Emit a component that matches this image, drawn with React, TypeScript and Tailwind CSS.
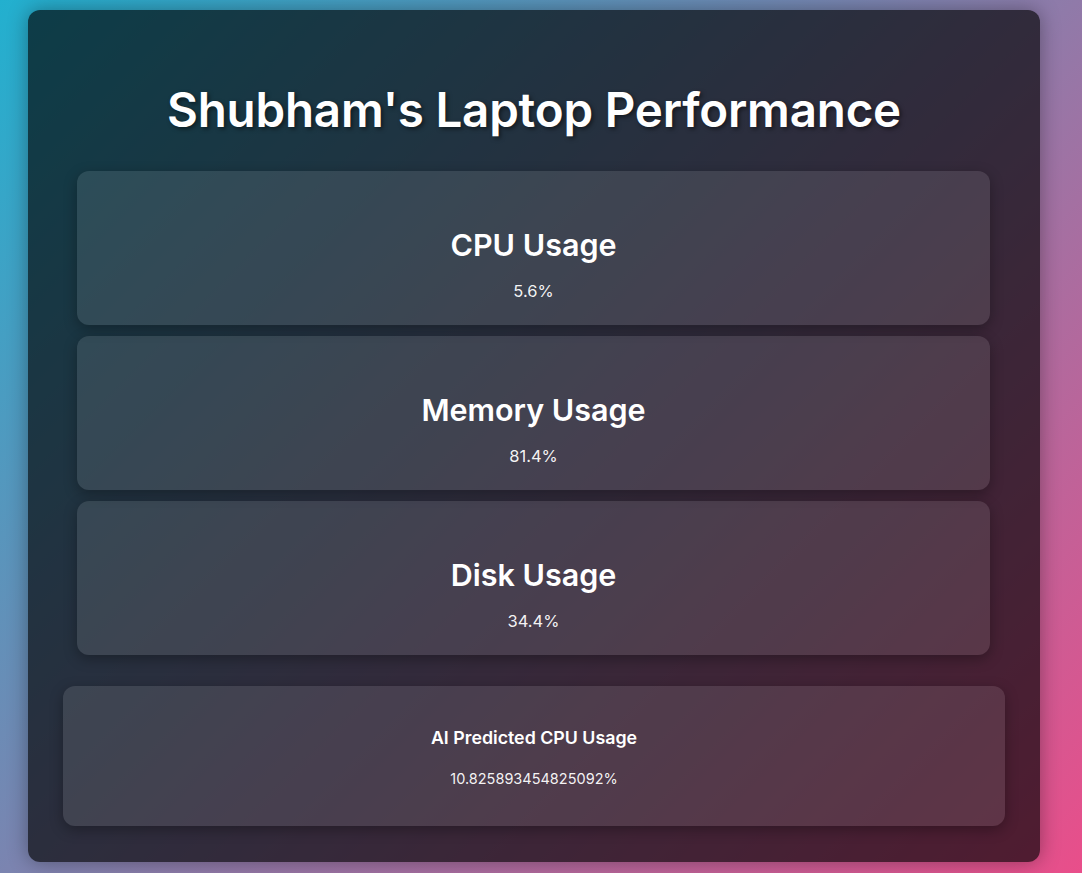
import React from "react";

const stats = [
  { label: "CPU Usage", value: "5.6%" },
  { label: "Memory Usage", value: "81.4%" },
  { label: "Disk Usage", value: "34.4%" },
];

export default function App() {
  return (
    <div
      className="min-h-screen w-full bg-[linear-gradient(135deg,#22b0cf_0%,#e94e8a_100%)] px-[28px] pt-[10px] pb-[11px]"
      style={{ fontFamily: "Inter, 'Noto Sans', sans-serif" }}
    >
      <div className="h-[852px] w-[1012px] rounded-[12px] bg-black/65 shadow-[0_0_20px_rgba(0,0,0,0.35)] flex flex-col">
        <h1 className="mt-[73px] h-[53px] text-center text-[47.5px] leading-[53px] font-semibold tracking-[-0.2px] text-white [text-shadow:2px_2px_4px_rgba(0,0,0,0.5)]">
          Shubham's Laptop Performance
        </h1>
        <div className="mt-[35px] flex flex-col gap-[11px] pl-[49px] pr-[50px]">
          {stats.map((s) => (
            <div
              key={s.label}
              className="flex h-[154px] flex-col items-center rounded-[12px] bg-white/10 pt-[57px] shadow-[0_4px_14px_rgba(0,0,0,0.3)]"
            >
              <h2 className="text-[30.5px] leading-[34px] font-semibold text-white">{s.label}</h2>
              <p className="mt-[17px] text-[16.5px] leading-[24px] text-white/95">{s.value}</p>
            </div>
          ))}
        </div>
        <div className="mx-[35px] mt-[31px] flex h-[140px] flex-col items-center rounded-[12px] bg-white/10 pt-[41px] shadow-[0_4px_14px_rgba(0,0,0,0.3)]">
          <h3 className="text-[17.8px] leading-[22px] font-semibold text-white">AI Predicted CPU Usage</h3>
          <p className="mt-[18px] text-[14.5px] leading-[24px] text-white/95">10.825893454825092%</p>
        </div>
      </div>
    </div>
  );
}
